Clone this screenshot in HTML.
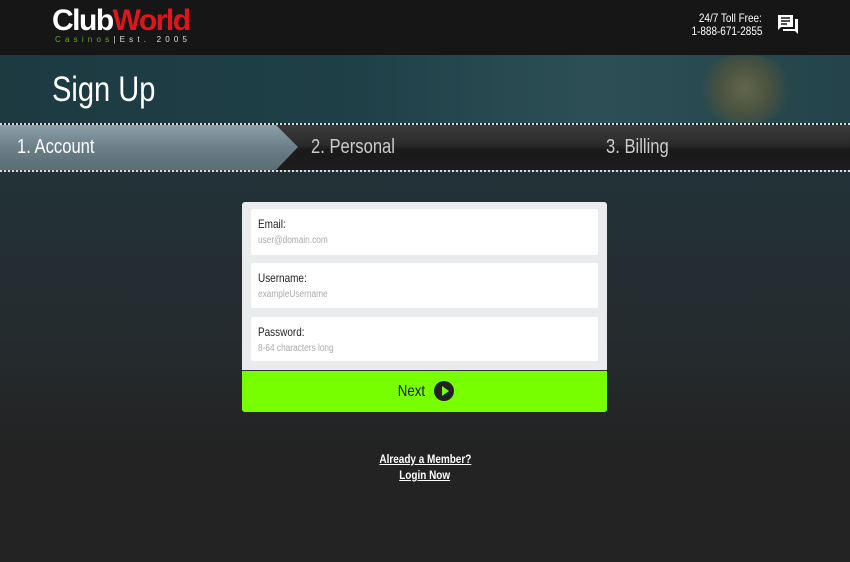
<!DOCTYPE html>
<html><head><meta charset="utf-8"><style>
*{margin:0;padding:0;box-sizing:border-box}
body{width:850px;height:562px;overflow:hidden;background:#232323;font-family:"Liberation Sans",sans-serif;position:relative}
.n{display:inline-block;transform:scaleX(.83);transform-origin:left top;white-space:nowrap}
.nr{display:inline-block;transform:scaleX(.83);transform-origin:right top;white-space:nowrap}
.nc{display:inline-block;transform:scaleX(.83);transform-origin:center top;white-space:nowrap}
.hdr{position:absolute;left:0;top:0;width:850px;height:55px;background:#161616}
.logo{position:absolute;left:52px;top:4px;font-weight:bold;font-size:30px;letter-spacing:-1.5px;color:#fff}
.logo span{color:#e0141c}
.sub{position:absolute;left:55px;top:35px;font-size:8px;letter-spacing:4.2px;color:#ddd}
.sub b{color:#5cb02a;font-weight:normal}
.toll{position:absolute;right:88px;top:12px;text-align:right;color:#fff;font-size:12px;line-height:13px}
.hero{position:absolute;left:0;top:55px;width:850px;height:68px;background:linear-gradient(90deg,#1d3a41,#1f3f47 40%,#2c4f55 70%,#24434a)}
.coin{position:absolute;left:690px;top:55px;width:110px;height:68px;border-radius:50%;background:radial-gradient(circle,#8a7a48 0,#5e5838 40%,rgba(40,60,60,0) 70%);opacity:.6}
h1{position:absolute;left:52px;top:70px;color:#fff;font-weight:normal;font-size:35px}
.steps{position:absolute;left:0;top:123px;width:850px;height:49px;background:linear-gradient(#3c3c3c,#2a2a2a 45%,#1a1a1a 55%,#1c1c1c);border-top:2px dotted #ddd;border-bottom:2px dotted #ddd}
.s1{position:absolute;left:0;top:0;width:298px;height:45px;background:linear-gradient(#8da0aa,#6b7f89 50%,#5a6d76);clip-path:polygon(0 0,276px 0,298px 22px,276px 45px,0 45px)}
.st{position:absolute;top:11px;color:#fff;font-size:20px}
.main{position:absolute;left:0;top:172px;width:850px;height:390px;background:linear-gradient(#223238,#252b2d 45%,#232323 70%)}
.card{position:absolute;left:242px;top:202px;width:365px;height:210px;background:#e9ebec;border-radius:3px;overflow:hidden}
.f{position:absolute;left:9px;width:347px;background:#fff;border-radius:2px;padding:8px 7px}
.f p{font-size:12px;color:#222}
.f i{display:block;font-style:normal;font-size:10px;color:#aaa;margin-top:4px}
.btn{position:absolute;left:0;top:168px;width:365px;height:42px;background:#77ff00;border-top:1px solid #333;text-align:center;font-size:16px;color:#222;line-height:42px}
.play{display:inline-block;width:20px;height:20px;border-radius:50%;background:#222;vertical-align:middle;position:relative;top:-1px;margin-left:6px}
.play:after{content:"";position:absolute;left:8px;top:5px;border-left:7px solid #77ff00;border-top:5px solid transparent;border-bottom:5px solid transparent}
.lk{position:absolute;left:0;width:850px;text-align:center;color:#fff;font-size:12px;font-weight:bold}
.lk span{text-decoration:underline}
</style></head><body>
<div class="hdr"><div class="logo">Club<span>World</span></div><div class="sub"><b>Casinos</b>|Est. 2005</div>
<div class="toll"><span class="nr">24/7 Toll Free:</span><br><span class="nr">1-888-671-2855</span></div>
<svg style="position:absolute;left:777px;top:14px" width="22" height="21" viewBox="0 0 22 21"><path d="M1 1h15v12H4l-3 3z" fill="#fff"/><path d="M4 4h9M4 7h9M4 10h6" stroke="#161616" stroke-width="1.6"/><path d="M18 5h3v15l-3-3H6v-2h12z" fill="#fff"/></svg></div>
<div class="hero"></div><div class="coin"></div>
<h1><span class="n">Sign Up</span></h1>
<div class="steps"><div class="s1"></div><div class="st" style="left:17px"><span class="n">1. Account</span></div><div class="st" style="left:311px;color:#ccc"><span class="n">2. Personal</span></div><div class="st" style="left:606px;color:#ccc"><span class="n">3. Billing</span></div></div>
<div class="main"></div>
<div class="card">
<div class="f" style="top:7px;height:46px"><p><span class="n">Email:</span></p><i><span class="n">user@domain.com</span></i></div>
<div class="f" style="top:61px;height:45px"><p><span class="n">Username:</span></p><i><span class="n">exampleUsername</span></i></div>
<div class="f" style="top:115px;height:44px"><p><span class="n">Password:</span></p><i><span class="n">8-64 characters long</span></i></div>
<div class="btn"><span class="nc">Next</span><span class="play"></span></div>
</div>
<div class="lk" style="top:452px"><span class="nc">Already a Member?</span></div>
<div class="lk" style="top:468px"><span class="nc">Login Now</span></div>
</body></html>
